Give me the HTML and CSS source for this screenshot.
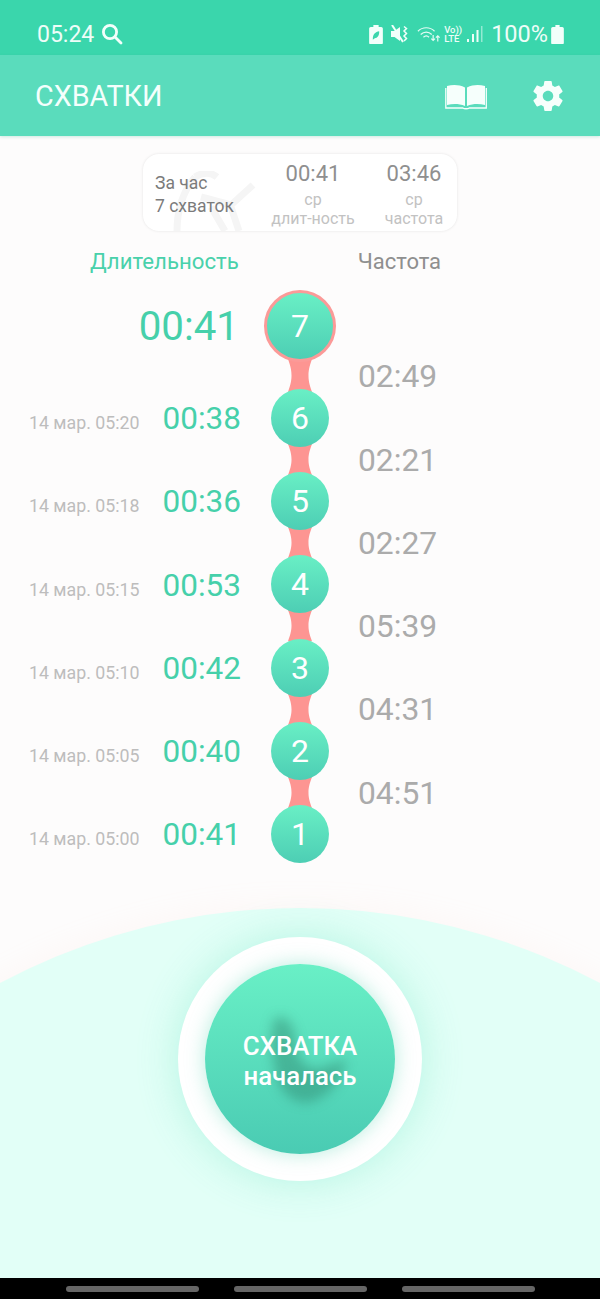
FILE: index.html
```html
<!DOCTYPE html>
<html lang="ru">
<head>
<meta charset="utf-8">
<title>Схватки</title>
<link rel="stylesheet" href="styles.css">
</head>
<body>
<div class="page">
  <header class="status">
    <div class="status-left">
      <span>05:24</span>
      <svg class="ic-search" viewBox="0 0 22 22"><circle cx="9" cy="9" r="6.6"/><path d="M14 14l6 6"/></svg>
    </div>
    <div class="status-right">
      <svg class="ic-batsave" viewBox="0 0 13 18"><path class="fill" d="M4 0h5v2h2.500c.8 0 1.500.7 1.500 1.500V17c0 .6-.4 1-1 1H1c-.6 0-1-.4-1-1V3.500C0 2.700.7 2 1.500 2H4z"/><path class="cut" d="M3.500 13c0-4 2.500-6.500 6-7 .3 3.800-1.500 6.500-4.500 6.700L3.500 14z"/></svg>
      <svg class="ic-mute" viewBox="0 0 18 18"><path class="fill" d="M0 6h3.500L9 2v14l-5.500-4H0z"/><path class="cutline" d="M1 0l11 17"/><path class="line" d="M13 1.500l2.500 2-2.500 2.500 2.500 2.500-2.500 2.500 2.500 2.500-2.500 2.500"/></svg>
      <svg class="ic-wifi" viewBox="0 0 26 18"><path class="thin" d="M1 6c5-5 13-5 18 0M4 9.500c3.500-3.500 8.500-3.500 12 0M7 12.500c2-2 4-2 6 0"/><path class="thin" d="M17.500 10v6m-2-2l2 2 2-2M22.500 17v-6m-2 2l2-2 2 2"/></svg>
      <span class="volte"><span>Vo))</span><span>LTE</span></span>
      <svg class="ic-signal" viewBox="0 0 16 18"><rect x="0" y="14" width="2" height="3"/><rect x="5" y="9" width="2" height="8"/><rect x="9.500" y="5" width="2" height="12"/><rect class="dim" x="14" y="1" width="1.500" height="16"/></svg>
      <span class="pct">100%</span>
      <svg class="ic-bat" viewBox="0 0 12 18"><path d="M4 0h4v2h2.500c.8 0 1.500.7 1.500 1.500V17c0 .6-.4 1-1 1H1c-.6 0-1-.4-1-1V3.500C0 2.700.7 2 1.500 2H4z"/></svg>
    </div>
  </header>

  <nav class="appbar">
    <h1 class="title">СХВАТКИ</h1>
    <div class="actions">
      <svg class="ic-book" viewBox="0 0 42 26"><path class="page-fill" d="M2 2c6-1.500 12-1.500 18 1.500V22c-6-2.500-12-2.500-18-1z"/><path class="page-fill" d="M40 2c-6-1.500-12-1.500-18 1.500V22c6-2.500 12-2.500 18-1z"/><path class="page-line" d="M.8 4v20h17c1.500 1 5 1 6.500 0h17V4"/></svg>
      <svg class="ic-gear" viewBox="0 0 24 24"><path d="M19.430 12.980c.04-.32.07-.64.07-.98s-.03-.66-.07-.98l2.110-1.650c.19-.15.24-.42.12-.64l-2-3.460c-.12-.22-.39-.3-.61-.22l-2.490 1c-.52-.4-1.080-.73-1.690-.98l-.38-2.650C14.460 2.180 14.250 2 14 2h-4c-.25 0-.46.18-.49.42l-.38 2.650c-.61.25-1.170.59-1.690.98l-2.490-1c-.23-.09-.49 0-.61.22l-2 3.460c-.13.22-.07.49.12.64l2.110 1.650c-.04.32-.07.65-.07.98s.03.66.07.98l-2.110 1.650c-.19.15-.24.42-.12.64l2 3.460c.12.22.39.3.61.22l2.490-1c.52.4 1.080.73 1.690.98l.38 2.650c.03.24.24.42.49.42h4c.25 0 .46-.18.49-.42l.38-2.650c.61-.25 1.170-.59 1.690-.98l2.490 1c.23.09.49 0 .61-.22l2-3.460c.12-.22.07-.49-.12-.64l-2.110-1.650zM12 15.500c-1.930 0-3.500-1.570-3.500-3.500s1.570-3.500 3.500-3.500 3.500 1.570 3.500 3.500-1.570 3.500-3.500 3.500z"/></svg>
    </div>
  </nav>

  <main class="content">
    <section class="summary">
      <svg class="watermark" viewBox="0 0 90 60"><path d="M6 60C6 36 14 18 24 6M24 6c8-5 16-5 22 0M30 26l30 8 22-20M40 36l14 24M60 36l8 24"/></svg>
      <div class="sum-hour"><span>За час</span><span>7 схваток</span></div>
      <div class="sum-stat sum-dur"><b>00:41</b><span>ср</span><span>длит-ность</span></div>
      <div class="sum-stat sum-freq"><b>03:46</b><span>ср</span><span>частота</span></div>
    </section>

    <div class="heads">
      <span class="head-dur">Длительность</span>
      <span class="head-freq">Частота</span>
    </div>

    <section class="timeline">
      <div class="col-dur">
        <div class="dur-row first"><span class="dur big">00:41</span></div>
        <div class="dur-row"><span class="date">14 мар. 05:20</span><span class="dur">00:38</span></div>
        <div class="dur-row"><span class="date">14 мар. 05:18</span><span class="dur">00:36</span></div>
        <div class="dur-row"><span class="date">14 мар. 05:15</span><span class="dur">00:53</span></div>
        <div class="dur-row"><span class="date">14 мар. 05:10</span><span class="dur">00:42</span></div>
        <div class="dur-row"><span class="date">14 мар. 05:05</span><span class="dur">00:40</span></div>
        <div class="dur-row"><span class="date">14 мар. 05:00</span><span class="dur">00:41</span></div>
      </div>
      <div class="col-nodes">
        <div class="node current">7</div>
        <svg class="link link-first" viewBox="0 0 24 32" preserveAspectRatio="none"><path d="M0 0H24C21 8 20.500 12 20.500 16C20.500 20 21 24 24 32H0C3 24 3.500 20 3.500 16C3.500 12 3 8 0 0Z"/></svg>
        <div class="node">6</div>
        <svg class="link" viewBox="0 0 24 32" preserveAspectRatio="none"><path d="M0 0H24C21 8 20.500 12 20.500 16C20.500 20 21 24 24 32H0C3 24 3.500 20 3.500 16C3.500 12 3 8 0 0Z"/></svg>
        <div class="node">5</div>
        <svg class="link" viewBox="0 0 24 32" preserveAspectRatio="none"><path d="M0 0H24C21 8 20.500 12 20.500 16C20.500 20 21 24 24 32H0C3 24 3.500 20 3.500 16C3.500 12 3 8 0 0Z"/></svg>
        <div class="node">4</div>
        <svg class="link" viewBox="0 0 24 32" preserveAspectRatio="none"><path d="M0 0H24C21 8 20.500 12 20.500 16C20.500 20 21 24 24 32H0C3 24 3.500 20 3.500 16C3.500 12 3 8 0 0Z"/></svg>
        <div class="node">3</div>
        <svg class="link" viewBox="0 0 24 32" preserveAspectRatio="none"><path d="M0 0H24C21 8 20.500 12 20.500 16C20.500 20 21 24 24 32H0C3 24 3.500 20 3.500 16C3.500 12 3 8 0 0Z"/></svg>
        <div class="node">2</div>
        <svg class="link" viewBox="0 0 24 32" preserveAspectRatio="none"><path d="M0 0H24C21 8 20.500 12 20.500 16C20.500 20 21 24 24 32H0C3 24 3.500 20 3.500 16C3.500 12 3 8 0 0Z"/></svg>
        <div class="node">1</div>
      </div>
      <div class="col-freq">
        <span>02:49</span>
        <span>02:21</span>
        <span>02:27</span>
        <span>05:39</span>
        <span>04:31</span>
        <span>04:51</span>
      </div>
    </section>

    <section class="action">
      <div class="ring">
        <button class="start" type="button">
          <svg class="blob" viewBox="0 0 110 110"><path d="M26 6c12-5 20 10 20 26 0 10 8 24 20 24 10 0 18-8 30-8-6 18-12 32-34 40-14 4-30-6-34-22-3-12-6-26-6-40 1-8 0-16 4-20z"/></svg>
          <span class="start-text">СХВАТКА<br>началась</span>
        </button>
      </div>
    </section>
  </main>

  <footer class="navbar">
    <i></i><i></i><i></i>
  </footer>
</div>
</body>
</html>
```

FILE: styles.css
```css
* { box-sizing: border-box; }
html, body { margin: 0; padding: 0; }
body { font-family: Roboto, "Noto Sans", sans-serif; background: #fdfcfc; }
.page { width: 600px; height: 1299px; display: flex; flex-direction: column; overflow: hidden; }

/* status bar */
.status { flex: 0 0 55px; background: #3ad6ac; color: #eefdf8; display: flex; justify-content: space-between; align-items: center; padding: 13px 36px 0 37px; }
.status-left { display: flex; align-items: center; gap: 7px; font-size: 23px; }
.ic-search { width: 22px; height: 22px; fill: none; stroke: #f2fffb; stroke-width: 2.800; stroke-linecap: round; }
.status-right { display: flex; align-items: center; }
.ic-batsave { width: 14px; height: 19px; margin-right: 8px; }
.ic-batsave .fill, .ic-mute .fill { fill: #f2fffb; }
.ic-batsave .cut { fill: #3ad6ac; }
.ic-mute { width: 18px; height: 18px; margin-right: 8px; }
.ic-mute .line { fill: none; stroke: #f2fffb; stroke-width: 1.500; }
.ic-mute .cutline { fill: none; stroke: #f2fffb; stroke-width: 2; }
.ic-wifi { width: 24px; height: 18px; margin-right: 3px; }
.thin { fill: none; stroke: #e6fbf5; stroke-width: 1.300; }
.volte { display: flex; flex-direction: column; font-size: 9.500px; line-height: 9.500px; font-weight: 500; color: #eefdf8; margin-right: 5px; }
.ic-signal { width: 16px; height: 18px; fill: #eefdf8; margin-right: 8px; }
.ic-signal .dim { opacity: .5; }
.pct { font-size: 23.500px; margin-right: 3px; }
.ic-bat { width: 13px; height: 19px; fill: #f2fffb; }

/* app bar */
.appbar { flex: 0 0 81px; background: #5adcbc; display: flex; justify-content: space-between; align-items: center; padding: 0 36px; box-shadow: 0 1px 3px rgba(60,180,150,.25); position: relative; z-index: 2; }
.title { margin: 0 0 0 -1px; font-size: 28.700px; font-weight: 400; color: #f4fffc; }
.actions { display: flex; align-items: center; gap: 43px; margin-right: -2px; }
.ic-book { width: 42px; height: 26px; margin-top: 2px; }
.page-fill { fill: #f6fffc; }
.page-line { fill: none; stroke: #f6fffc; stroke-width: 1.300; }
.ic-gear { width: 36px; height: 36px; fill: #f6fffc; }

/* content */
.content { flex: 1; display: flex; flex-direction: column; position: relative; background: #fdfcfc; }

.summary { position: relative; align-self: center; margin-top: 18px; width: 314px; height: 77px; background: #fff; border-radius: 16px; box-shadow: 0 0 3px rgba(0,0,0,.1); display: flex; color: #777; overflow: hidden; }
.watermark { position: absolute; left: 28px; top: 17px; width: 90px; height: 60px; fill: none; stroke: #f5f5f5; stroke-width: 7; }
.sum-hour { position: relative; display: flex; flex-direction: column; justify-content: center; gap: 1px; width: 120px; padding: 3px 0 0 12px; font-size: 17.500px; line-height: 22px; color: #7b7b7b; }
.sum-stat { position: relative; display: flex; flex-direction: column; align-items: center; font-size: 16px; line-height: 19px; color: #c2c2c2; padding-top: 7px; }
.sum-stat b { font-size: 22px; line-height: 26px; font-weight: 400; color: #8f8f8f; margin-bottom: 3px; }
.sum-dur { width: 98px; margin-left: 1px; }
.sum-freq { width: 72px; margin-left: 16px; }

.heads { display: flex; height: 59px; align-items: center; font-size: 22.200px; padding-top: 1px; }
.head-dur { margin-left: 90px; color: #49d1ab; }
.head-freq { margin-left: 119px; color: #8f8f8f; font-size: 22px; }

/* timeline */
.timeline { display: flex; height: 573px; position: relative; }
.col-dur { width: 264px; padding: 1px 23px 0 0; display: flex; flex-direction: column; }
.dur-row { height: 83.200px; line-height: 83.200px; display: flex; justify-content: flex-end; align-items: baseline; gap: 23px; }
.dur-row.first { height: 72px; line-height: 72px; margin-bottom: 14.300px; padding-right: 2px; }
.dur { font-size: 31.500px; color: #46d0aa; }
.dur.big { font-size: 40.300px; }
.date { font-size: 17.800px; color: #bdbdbd; }

.col-nodes { width: 72px; display: flex; flex-direction: column; align-items: center; }
.node { flex: none; width: 58px; height: 58px; border-radius: 50%; background: linear-gradient(#69efc5, #4dceb4); color: #fff; font-size: 32px; display: flex; align-items: center; justify-content: center; position: relative; z-index: 1; }
.node.current { width: 72px; height: 72px; border: 3.500px solid #fb9a98; }
.link { flex: none; width: 24px; height: 31.200px; margin: -3px 0; fill: #fd9592; }
.link-first { height: 33px; }

.col-freq { margin-left: 22px; padding-top: 45.300px; display: flex; flex-direction: column; }
.col-freq span { height: 83.300px; line-height: 83.300px; font-size: 31.800px; color: #ababab; }

/* button area */
.action { flex: 1; position: relative; display: flex; justify-content: center; overflow: hidden; }
.action::before { content: ""; position: absolute; left: -337px; top: 45px; width: 1274px; height: 1274px; border-radius: 50%; background: #e2fff7; box-shadow: 0 -8px 24px rgba(255,200,190,.08); }
.ring { position: relative; margin-top: 74px; width: 244px; height: 244px; border-radius: 50%; background: #fff; box-shadow: 0 0 40px rgba(80,220,180,.3); display: flex; align-items: center; justify-content: center; }
.start { position: relative; width: 190px; height: 190px; padding: 0; border: 0; border-radius: 50%; background: linear-gradient(#69f0c6, #4acbb3); box-shadow: 0 0 20px rgba(80,210,175,.4); font-family: inherit; overflow: hidden; }
.blob { position: absolute; left: 44px; top: 48px; width: 112px; height: 112px; fill: rgba(35,110,90,.36); filter: blur(6px); }
.start-text { position: relative; display: block; color: #fff; font-size: 25.800px; line-height: 30px; font-weight: 500; margin-top: 4px; }

/* navigation bar */
.navbar { flex: 0 0 21px; background: #000; display: flex; justify-content: center; gap: 35px; padding-top: 8px; }
.navbar i { width: 133px; height: 6px; border-radius: 3px; background: #666; }
```
